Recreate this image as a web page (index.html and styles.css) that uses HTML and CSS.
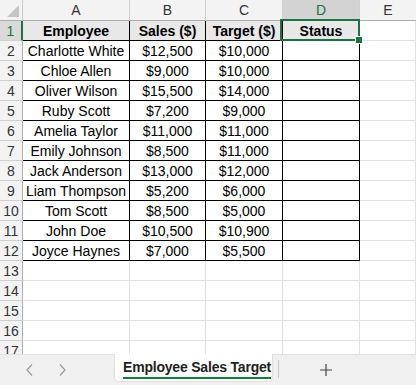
FILE: index.html
```html
<!DOCTYPE html>
<html lang="en">
<head>
    <meta charset="UTF-8">
    <title>Employee Sales Target</title>
    <link rel="stylesheet" href="styles.css">
</head>
<body>
    <div class="planilha">
        <div class="canto"><span class="triangulo"></span></div>
        <div class="col-cab">A</div>
        <div class="col-cab">B</div>
        <div class="col-cab">C</div>
        <div class="col-cab ativo">D</div>
        <div class="col-cab fim">E</div>

        <div class="lin-cab ativo">1</div>
        <div class="cel tab titulo">Employee</div>
        <div class="cel tab titulo">Sales ($)</div>
        <div class="cel tab titulo">Target ($)</div>
        <div class="cel tab titulo selecionada">Status</div>
        <div class="cel"></div>

        <div class="lin-cab">2</div>
        <div class="cel tab">Charlotte White</div>
        <div class="cel tab">$12,500</div>
        <div class="cel tab">$10,000</div>
        <div class="cel tab"></div>
        <div class="cel"></div>

        <div class="lin-cab">3</div>
        <div class="cel tab">Chloe Allen</div>
        <div class="cel tab">$9,000</div>
        <div class="cel tab">$10,000</div>
        <div class="cel tab"></div>
        <div class="cel"></div>

        <div class="lin-cab">4</div>
        <div class="cel tab">Oliver Wilson</div>
        <div class="cel tab">$15,500</div>
        <div class="cel tab">$14,000</div>
        <div class="cel tab"></div>
        <div class="cel"></div>

        <div class="lin-cab">5</div>
        <div class="cel tab">Ruby Scott</div>
        <div class="cel tab">$7,200</div>
        <div class="cel tab">$9,000</div>
        <div class="cel tab"></div>
        <div class="cel"></div>

        <div class="lin-cab">6</div>
        <div class="cel tab">Amelia Taylor</div>
        <div class="cel tab">$11,000</div>
        <div class="cel tab">$11,000</div>
        <div class="cel tab"></div>
        <div class="cel"></div>

        <div class="lin-cab">7</div>
        <div class="cel tab">Emily Johnson</div>
        <div class="cel tab">$8,500</div>
        <div class="cel tab">$11,000</div>
        <div class="cel tab"></div>
        <div class="cel"></div>

        <div class="lin-cab">8</div>
        <div class="cel tab">Jack Anderson</div>
        <div class="cel tab">$13,000</div>
        <div class="cel tab">$12,000</div>
        <div class="cel tab"></div>
        <div class="cel"></div>

        <div class="lin-cab">9</div>
        <div class="cel tab">Liam Thompson</div>
        <div class="cel tab">$5,200</div>
        <div class="cel tab">$6,000</div>
        <div class="cel tab"></div>
        <div class="cel"></div>

        <div class="lin-cab">10</div>
        <div class="cel tab">Tom Scott</div>
        <div class="cel tab">$8,500</div>
        <div class="cel tab">$5,000</div>
        <div class="cel tab"></div>
        <div class="cel"></div>

        <div class="lin-cab">11</div>
        <div class="cel tab">John Doe</div>
        <div class="cel tab">$10,500</div>
        <div class="cel tab">$10,900</div>
        <div class="cel tab"></div>
        <div class="cel"></div>

        <div class="lin-cab">12</div>
        <div class="cel tab">Joyce Haynes</div>
        <div class="cel tab">$7,000</div>
        <div class="cel tab">$5,500</div>
        <div class="cel tab"></div>
        <div class="cel"></div>

        <div class="lin-cab">13</div>
        <div class="cel"></div><div class="cel"></div><div class="cel"></div><div class="cel"></div><div class="cel"></div>
        <div class="lin-cab">14</div>
        <div class="cel"></div><div class="cel"></div><div class="cel"></div><div class="cel"></div><div class="cel"></div>
        <div class="lin-cab">15</div>
        <div class="cel"></div><div class="cel"></div><div class="cel"></div><div class="cel"></div><div class="cel"></div>
        <div class="lin-cab">16</div>
        <div class="cel"></div><div class="cel"></div><div class="cel"></div><div class="cel"></div><div class="cel"></div>
        <div class="lin-cab">17</div>
        <div class="cel"></div><div class="cel"></div><div class="cel"></div><div class="cel"></div><div class="cel"></div>
    </div>

    <div class="abas">
        <div class="navegacao">
            <svg width="10" height="14" viewBox="0 0 10 14"><path d="M7 1.5 L2 7 L7 12.5" fill="none" stroke="#9a9a9a" stroke-width="1.2"/></svg>
            <svg width="10" height="14" viewBox="0 0 10 14"><path d="M3 1.5 L8 7 L3 12.5" fill="none" stroke="#9a9a9a" stroke-width="1.2"/></svg>
        </div>
        <div class="aba">
            <span class="aba-nome">Employee Sales Target</span>
        </div>
        <div class="divisor"></div>
        <div class="nova">
            <svg width="14" height="14" viewBox="0 0 14 14"><path d="M7 1 V13 M1 7 H13" stroke="#444" stroke-width="1.2"/></svg>
        </div>
    </div>
</body>
</html>
```

FILE: styles.css
```css
*{
    box-sizing: border-box;
}

body{
    margin: 0;
    width: 416px;
    height: 385px;
    overflow: hidden;
    font-family: "Liberation Sans", Arial, sans-serif;
    font-size: 14px;
    color: #000;
    background-color: #ffffff;
}

.planilha{
    display: grid;
    grid-template-columns: 23px 107px 76px 77px 77px 56px;
    grid-template-rows: 21px repeat(17, 20px);
    height: 354px;
    overflow: hidden;
}

.canto{
    position: relative;
    background-color: #f3f3f3;
    border-right: 1px solid #c9c9c9;
    border-bottom: 1px solid #adadad;
}

.triangulo{
    position: absolute;
    right: 3px;
    bottom: 3px;
    width: 0;
    height: 0;
    border-left: 12px solid transparent;
    border-bottom: 12px solid #c6c6c6;
}

.col-cab{
    display: flex;
    align-items: center;
    justify-content: center;
    background-color: #f3f3f3;
    color: #333;
    border-right: 1px solid #d0d0d0;
    border-bottom: 1px solid #adadad;
}

.col-cab.fim{
    border-right: none;
}

.col-cab.ativo{
    background-color: #d3d3d3;
    color: #1e7145;
    border-bottom: 2px solid #1e7145;
}

.lin-cab{
    display: flex;
    align-items: center;
    justify-content: center;
    background-color: #f3f3f3;
    color: #333;
    border-right: 1px solid #adadad;
    border-bottom: 1px solid #d0d0d0;
}

.lin-cab.ativo{
    background-color: #dadada;
    color: #1e7145;
    border-right: 2px solid #1e7145;
}

.cel{
    display: flex;
    align-items: center;
    justify-content: center;
    padding-top: 1px;
    white-space: nowrap;
    border-right: 1px solid #e1e1e1;
    border-bottom: 1px solid #e1e1e1;
}

.cel.tab{
    border-right-color: #000;
    border-bottom-color: #000;
}

.cel.titulo{
    font-weight: bold;
    background-color: #e8e8e8;
}

.selecionada{
    position: relative;
}

.selecionada::after{
    content: "";
    position: absolute;
    top: -2px;
    left: -3px;
    right: -1px;
    bottom: -1px;
    border: 2px solid #1e7145;
}

.selecionada::before{
    content: "";
    position: absolute;
    right: -4px;
    bottom: -4px;
    width: 6px;
    height: 6px;
    background-color: #1e7145;
    border: 1px solid #fff;
    z-index: 1;
}

.abas{
    display: flex;
    align-items: flex-start;
    height: 31px;
    background-color: #f0f0f0;
    border-top: 1px solid #e3e3e3;
}

.navegacao{
    display: flex;
    gap: 22px;
    width: 114px;
    padding-left: 25px;
    padding-top: 8px;
}

.aba{
    width: 159px;
    height: 28px;
    margin-top: -1px;
    background-color: #ffffff;
    border: 1px solid #e0e0e0;
    border-top: none;
    border-radius: 0 0 5px 5px;
    padding: 5px 0 0 8px;
}

.aba-nome{
    display: inline-block;
    font-weight: bold;
    color: #222;
    padding-bottom: 2px;
    border-bottom: 2px solid #107c41;
    line-height: 16px;
    letter-spacing: -0.2px;
}

.divisor{
    width: 1px;
    height: 18px;
    margin: 5px 0 0 5px;
    background-color: #c8c8c8;
}

.nova{
    padding: 8px 0 0 40px;
}
```
